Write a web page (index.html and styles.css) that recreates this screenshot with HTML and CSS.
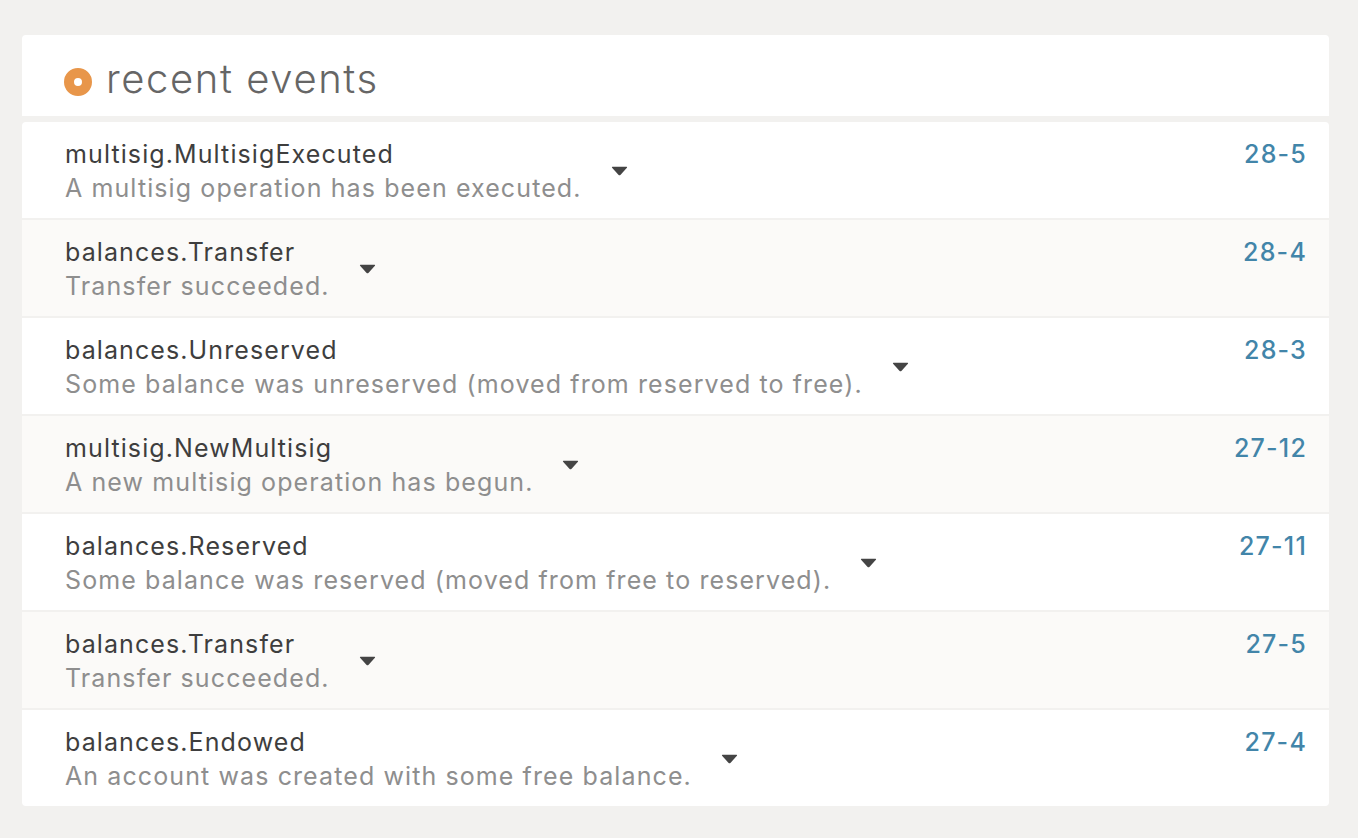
FILE: index.html
```html
<!DOCTYPE html>
<html>
<head>
<meta charset="utf-8">
<link rel="stylesheet" href="styles.css">
</head>
<body>
<main class="page">
  <section class="panel">
    <header class="panel-head">
      <span class="dot"></span>
      <h1 class="panel-title">recent events</h1>
    </header>
    <div class="events">
      <div class="event">
        <div class="event-info">
          <div class="event-name">multisig.MultisigExecuted</div>
          <div class="event-desc">A multisig operation has been executed.</div>
        </div>
        <svg class="caret" viewBox="0 0 17 10" width="17" height="10"><path d="M1.5 0.8 H15.5 Q16.6 0.8 15.9 1.8 L9.4 8.9 Q8.5 9.8 7.6 8.9 L1.1 1.8 Q0.4 0.8 1.5 0.8 Z"/></svg>
        <a class="event-id">28-5</a>
      </div>
      <div class="event">
        <div class="event-info">
          <div class="event-name">balances.Transfer</div>
          <div class="event-desc">Transfer succeeded.</div>
        </div>
        <svg class="caret" viewBox="0 0 17 10" width="17" height="10"><path d="M1.5 0.8 H15.5 Q16.6 0.8 15.9 1.8 L9.4 8.9 Q8.5 9.8 7.6 8.9 L1.1 1.8 Q0.4 0.8 1.5 0.8 Z"/></svg>
        <a class="event-id">28-4</a>
      </div>
      <div class="event">
        <div class="event-info">
          <div class="event-name">balances.Unreserved</div>
          <div class="event-desc">Some balance was unreserved (moved from reserved to free).</div>
        </div>
        <svg class="caret" viewBox="0 0 17 10" width="17" height="10"><path d="M1.5 0.8 H15.5 Q16.6 0.8 15.9 1.8 L9.4 8.9 Q8.5 9.8 7.6 8.9 L1.1 1.8 Q0.4 0.8 1.5 0.8 Z"/></svg>
        <a class="event-id">28-3</a>
      </div>
      <div class="event">
        <div class="event-info">
          <div class="event-name">multisig.NewMultisig</div>
          <div class="event-desc">A new multisig operation has begun.</div>
        </div>
        <svg class="caret" viewBox="0 0 17 10" width="17" height="10"><path d="M1.5 0.8 H15.5 Q16.6 0.8 15.9 1.8 L9.4 8.9 Q8.5 9.8 7.6 8.9 L1.1 1.8 Q0.4 0.8 1.5 0.8 Z"/></svg>
        <a class="event-id">27-12</a>
      </div>
      <div class="event">
        <div class="event-info">
          <div class="event-name">balances.Reserved</div>
          <div class="event-desc">Some balance was reserved (moved from free to reserved).</div>
        </div>
        <svg class="caret" viewBox="0 0 17 10" width="17" height="10"><path d="M1.5 0.8 H15.5 Q16.6 0.8 15.9 1.8 L9.4 8.9 Q8.5 9.8 7.6 8.9 L1.1 1.8 Q0.4 0.8 1.5 0.8 Z"/></svg>
        <a class="event-id">27-11</a>
      </div>
      <div class="event">
        <div class="event-info">
          <div class="event-name">balances.Transfer</div>
          <div class="event-desc">Transfer succeeded.</div>
        </div>
        <svg class="caret" viewBox="0 0 17 10" width="17" height="10"><path d="M1.5 0.8 H15.5 Q16.6 0.8 15.9 1.8 L9.4 8.9 Q8.5 9.8 7.6 8.9 L1.1 1.8 Q0.4 0.8 1.5 0.8 Z"/></svg>
        <a class="event-id">27-5</a>
      </div>
      <div class="event">
        <div class="event-info">
          <div class="event-name">balances.Endowed</div>
          <div class="event-desc">An account was created with some free balance.</div>
        </div>
        <svg class="caret" viewBox="0 0 17 10" width="17" height="10"><path d="M1.5 0.8 H15.5 Q16.6 0.8 15.9 1.8 L9.4 8.9 Q8.5 9.8 7.6 8.9 L1.1 1.8 Q0.4 0.8 1.5 0.8 Z"/></svg>
        <a class="event-id">27-4</a>
      </div>
    </div>
  </section>
</main>
</body>
</html>
```

FILE: styles.css
```css
html, body {
  margin: 0;
  padding: 0;
  background: #f2f1ef;
}
body {
  font-family: Inter, "Noto Sans", "Liberation Sans", sans-serif;
}
.page {
  padding: 35px 29px 0 22px;
}
.panel {
  display: flex;
  flex-direction: column;
  gap: 6px;
}
.panel-head {
  background: #fff;
  height: 81px;
  box-sizing: border-box;
  padding: 12px 0 0 42px;
  display: flex;
  align-items: center;
  gap: 14px;
  border-radius: 4px 4px 0 0;
}
.dot {
  width: 28px;
  height: 28px;
  box-sizing: border-box;
  border-radius: 50%;
  border: 10px solid #e8964a;
  flex: none;
}
.panel-title {
  margin: 0 0 5px;
  font-size: 40px;
  line-height: 40px;
  font-weight: 300;
  color: #666;
  letter-spacing: 1.6px;
}
.events {
  display: flex;
  flex-direction: column;
  gap: 2px;
  border-radius: 4px;
  overflow: hidden;
}
.event {
  height: 96px;
  box-sizing: border-box;
  background: #fff;
  display: flex;
  align-items: flex-start;
  padding: 15px 22px 0 43px;
}
.event:nth-child(even) {
  background: #fbfaf8;
}
.event-info {
  display: flex;
  flex-direction: column;
}
.event-name {
  font-size: 25px;
  line-height: 34px;
  letter-spacing: 1.1px;
  color: #3e3e3e;
}
.event-desc {
  font-size: 25px;
  line-height: 34px;
  letter-spacing: 1.1px;
  color: #8e8e8e;
}
.caret {
  align-self: center;
  margin: -13px 0 0 29px;
  fill: #444;
  flex: none;
}
.event-id {
  margin-left: auto;
  font-size: 25px;
  line-height: 34px;
  letter-spacing: 1.2px;
  color: #4285a9;
  font-weight: 500;
}
```
